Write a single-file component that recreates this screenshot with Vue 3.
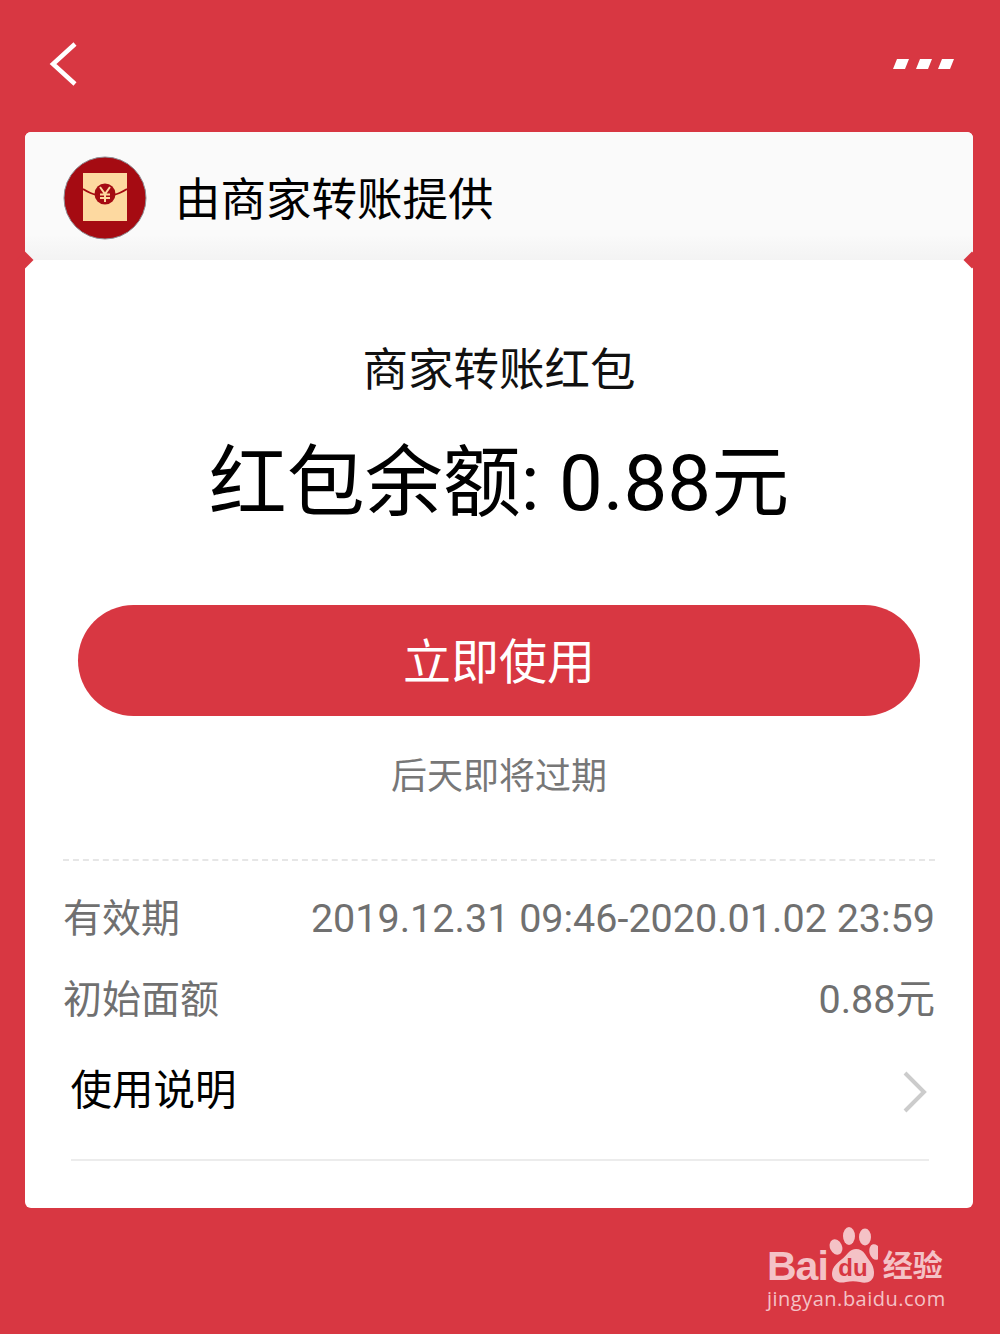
<script setup>
const details = [
  { label: '有效期', value: '2019.12.31 09:46-2020.01.02 23:59' },
  { label: '初始面额', value: '0.88元' }
]
</script>

<template>
  <div class="page">
    <div class="topbar">
      <svg class="back" width="28" height="44" viewBox="0 0 28 44">
        <path d="M26 2 L4 22 L26 42" fill="none" stroke="#fff" stroke-width="4.5" />
      </svg>
      <svg class="more" width="62" height="12" viewBox="0 0 62 12">
        <path d="M4 0H16L12 10H0Z M27 0H39L35 10H23Z M49 0H61L57 10H45Z" fill="#fff" />
      </svg>
    </div>

    <div class="card">
      <div class="card-head">
        <svg class="packet" width="84" height="84" viewBox="0 0 84 84">
          <circle cx="42" cy="42" r="41" fill="#a50b12" stroke="#8f8f96" stroke-width="1" />
          <rect x="20" y="17" width="44" height="48" fill="#fdd9a0" />
          <path d="M20 33 Q28 38 34 39 M64 33 Q56 38 50 39" fill="none" stroke="#a50b12" stroke-width="2" />
          <circle cx="42" cy="38" r="10.5" fill="#a50b12" />
          <path d="M37 31 L42 38 L47 31 M42 38 V46 M37 38.5 H47 M37 42 H47" fill="none" stroke="#fdd9a0" stroke-width="2" />
        </svg>
        <span class="merchant">由商家转账提供</span>
      </div>
      <i class="notch left"></i>
      <i class="notch right"></i>

      <div class="card-body">
        <div class="title">商家转账红包</div>
        <div class="balance">红包余额: 0.88元</div>
        <button class="use-btn">立即使用</button>
        <div class="expire">后天即将过期</div>

        <div class="details">
          <div v-for="item in details" :key="item.label" class="detail-row">
            <span class="detail-label">{{ item.label }}</span>
            <span>{{ item.value }}</span>
          </div>
        </div>

        <div class="instructions">
          <span>使用说明</span>
          <svg width="26" height="42" viewBox="0 0 26 42">
            <path d="M3 2 L22 21 L3 40" fill="none" stroke="#cccccc" stroke-width="4" />
          </svg>
        </div>
      </div>
    </div>

    <div class="watermark">
      <div class="wm-logo">
        <span class="wm-bai">Bai</span>
        <svg width="50" height="58" viewBox="0 0 50 58">
          <ellipse cx="21" cy="10" rx="6" ry="9" fill="#f4c2c6" />
          <ellipse cx="37" cy="11" rx="6" ry="8.5" fill="#f4c2c6" />
          <ellipse cx="8" cy="21" rx="6" ry="8" transform="rotate(-25 8 21)" fill="#f4c2c6" />
          <ellipse cx="47" cy="26" rx="5.5" ry="8" transform="rotate(-15 47 26)" fill="#f4c2c6" />
          <path d="M4 48 C4 38 14 35 20 27 C25 21 33 22 37 28 C41 35 46 38 46 47 C46 56 38 58 32 56 C27 55 23 55 18 56 C11 58 4 55 4 48Z" fill="#f4c2c6" />
          <text x="25" y="50" text-anchor="middle" class="wm-du">du</text>
        </svg>
        <span class="wm-cn">经验</span>
      </div>
      <div class="wm-url">jingyan.baidu.com</div>
    </div>
  </div>
</template>

<style>
body {
  background: #d83742;
}
</style>

<style scoped>
.page {
  position: relative;
  width: 1000px;
  height: 1334px;
  background: #d83742;
  font-family: Roboto, "Noto Sans CJK SC", sans-serif;
  overflow: hidden;
}

.topbar {
  height: 132px;
  display: flex;
  align-items: flex-start;
  justify-content: space-between;
  padding: 0 45px 0 49px;
  box-sizing: border-box;
}

.back {
  margin-top: 42px;
}

.more {
  margin-top: 59px;
}

.card {
  position: relative;
  width: 948px;
  height: 1076px;
  margin-left: 25px;
  background: #fff;
  border-radius: 6px;
}

.card-head {
  height: 128px;
  display: flex;
  align-items: center;
  gap: 28px;
  padding-left: 38px;
  box-sizing: border-box;
  border-radius: 6px 6px 0 0;
  background: linear-gradient(#fafafa 80%, #f3f3f3);
}

.packet {
  margin-top: 4px;
}

.merchant {
  font-size: 45.5px;
  color: #000;
}

.notch {
  position: absolute;
  top: 122px;
  width: 12px;
  height: 12px;
  background: #d83742;
  transform: rotate(45deg);
}

.notch.left {
  left: -6px;
}

.notch.right {
  right: -5px;
}

.card-body {
  display: flex;
  flex-direction: column;
  align-items: center;
}

.title {
  margin-top: 78px;
  height: 66px;
  line-height: 66px;
  font-size: 45.5px;
  color: #111;
}

.balance {
  margin-top: 24px;
  height: 112px;
  line-height: 112px;
  font-size: 78px;
  color: #000;
}

.use-btn {
  margin-top: 65px;
  width: 842px;
  height: 111px;
  padding: 0 0 6px;
  border: none;
  border-radius: 56px;
  background: #d83742;
  color: #fff;
  font-family: inherit;
  font-size: 48px;
}

.expire {
  margin-top: 35px;
  height: 52px;
  line-height: 52px;
  font-size: 36px;
  color: #777;
}

.details {
  margin-top: 56px;
  width: 872px;
  padding-top: 18px;
  border-top: 2px dashed #e6e6e6;
  color: #707070;
  font-size: 39.5px;
}

.detail-row {
  display: flex;
  justify-content: space-between;
  height: 81px;
  line-height: 80px;
}

.detail-label {
  font-size: 39px;
}

.instructions {
  width: 858px;
  height: 120px;
  margin-left: 1px;
  padding: 0 1px 26px 0;
  box-sizing: border-box;
  display: flex;
  align-items: center;
  justify-content: space-between;
  border-bottom: 2px solid #ececec;
  font-size: 41.5px;
  color: #000;
}

.instructions svg {
  margin-top: 10px;
}

.watermark {
  position: absolute;
  left: 767px;
  top: 1226px;
  color: #f4c2c6;
}

.wm-logo {
  display: flex;
  align-items: flex-end;
  height: 58px;
}

.wm-bai {
  font-family: "Liberation Sans", sans-serif;
  font-weight: 700;
  font-size: 41px;
  line-height: 36px;
  letter-spacing: -1px;
}

.wm-du {
  font-family: "Liberation Sans", sans-serif;
  font-weight: 700;
  font-size: 24px;
  fill: #d83742;
}

.wm-cn {
  font-size: 30px;
  line-height: 36px;
  font-weight: 700;
  margin-left: 5px;
}

.wm-url {
  margin-top: 3px;
  font-family: "Open Sans", sans-serif;
  font-size: 20px;
  line-height: 24px;
  letter-spacing: 0.5px;
  white-space: nowrap;
}
</style>
